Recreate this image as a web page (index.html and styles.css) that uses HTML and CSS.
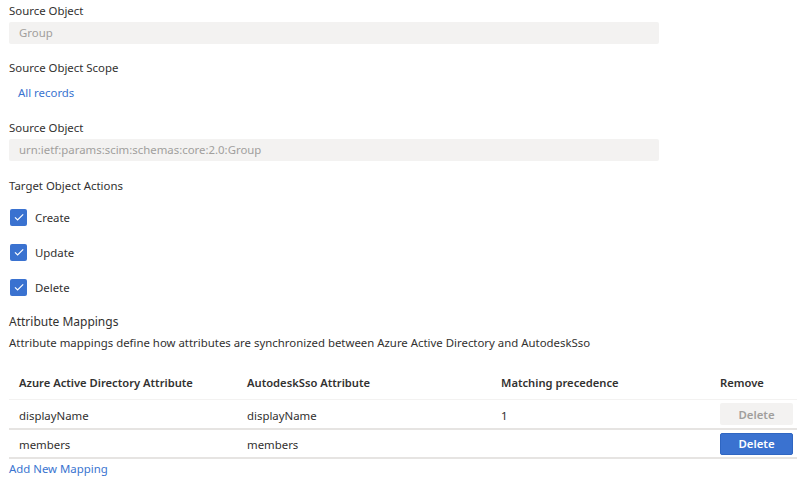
FILE: index.html
```html
<!DOCTYPE html>
<html>
<head>
<meta charset="utf-8">
<link rel="stylesheet" href="styles.css">
</head>
<body>
<div class="page">
  <div class="label first">Source Object</div>
  <div class="input">Group</div>

  <div class="label gap16">Source Object Scope</div>
  <a class="link scope">All records</a>

  <div class="label gap19">Source Object</div>
  <div class="input">urn:ietf:params:scim:schemas:core:2.0:Group</div>

  <div class="label gap17">Target Object Actions</div>
  <div class="checks">
    <label class="check"><span class="box"><svg viewBox="0 0 16 16" width="16" height="16"><path d="M4 8.3l2.6 2.6L12.2 5.3" fill="none" stroke="#fff" stroke-width="1.2"/></svg></span>Create</label>
    <label class="check"><span class="box"><svg viewBox="0 0 16 16" width="16" height="16"><path d="M4 8.3l2.6 2.6L12.2 5.3" fill="none" stroke="#fff" stroke-width="1.2"/></svg></span>Update</label>
    <label class="check"><span class="box"><svg viewBox="0 0 16 16" width="16" height="16"><path d="M4 8.3l2.6 2.6L12.2 5.3" fill="none" stroke="#fff" stroke-width="1.2"/></svg></span>Delete</label>
  </div>

  <div class="section-title">Attribute Mappings</div>
  <div class="desc">Attribute mappings define how attributes are synchronized between Azure Active Directory and AutodeskSso</div>

  <div class="table">
    <div class="row head">
      <div class="cell">Azure Active Directory Attribute</div>
      <div class="cell">AutodeskSso Attribute</div>
      <div class="cell">Matching precedence</div>
      <div class="cell last">Remove</div>
    </div>
    <div class="row r1">
      <div class="cell txt">displayName</div>
      <div class="cell txt">displayName</div>
      <div class="cell txt">1</div>
      <div class="cell last"><button class="btn disabled">Delete</button></div>
    </div>
    <div class="row r2">
      <div class="cell txt">members</div>
      <div class="cell txt">members</div>
      <div class="cell txt"></div>
      <div class="cell last"><button class="btn primary">Delete</button></div>
    </div>
  </div>
  <a class="link add">Add New Mapping</a>
</div>
</body>
</html>
```

FILE: styles.css
```css
html, body {
  margin: 0;
  padding: 0;
  background: #ffffff;
}
body {
  font-family: "Noto Sans", "Open Sans", sans-serif;
  font-size: 11.4px;
  color: #323130;
}
.page {
  display: flex;
  flex-direction: column;
  align-items: flex-start;
  padding: 3px 0 0 9px;
}
.label {
  line-height: 16px;
  height: 16px;
}
.label + .input { margin-top: 3px; }
.gap16 { margin-top: 16px; }
.gap19 { margin-top: 19px; }
.gap17 { margin-top: 17px; }
.input {
  box-sizing: border-box;
  width: 650px;
  height: 22px;
  line-height: 22px;
  padding-left: 10px;
  background: #f3f2f1;
  border-radius: 2px;
  color: #a19f9d;
}
.link {
  color: #3a74d0;
  line-height: 16px;
  cursor: pointer;
}
.scope {
  margin-top: 9px;
  margin-left: 9px;
}
.checks {
  display: flex;
  flex-direction: column;
  gap: 17px;
  margin-top: 14px;
}
.check {
  display: flex;
  align-items: center;
  height: 18px;
  gap: 8px;
  padding-left: 1px;
}
.box {
  width: 17px;
  height: 17px;
  box-sizing: border-box;
  background: #3a72d0;
  border-radius: 2px;
  display: flex;
  align-items: center;
  justify-content: center;
}
.section-title {
  margin-top: 18px;
  line-height: 16px;
  font-size: 12px;
}
.desc {
  margin-top: 5px;
  line-height: 16px;
}
.table {
  margin-top: 16px;
  width: 788px;
  display: flex;
  flex-direction: column;
}
.row {
  display: grid;
  grid-template-columns: 228px 254px 219px 1fr;
  align-items: center;
}
.cell {
  padding-left: 10px;
  line-height: 16px;
}
.txt {
  padding-top: 3px;
}
.head {
  height: 32px;
  font-weight: 600;
  font-size: 11.2px;
  border-bottom: 1px solid #f3f2f1;
}
.r1 {
  height: 28px;
  border-bottom: 2px solid #e6e4e2;
}
.r2 {
  height: 27px;
  border-bottom: 2px solid #e6e4e2;
}
.btn {
  width: 73px;
  height: 22px;
  border-radius: 2px;
  font-family: inherit;
  font-size: 11.4px;
  font-weight: 600;
  border: 1px solid transparent;
  padding: 0;
}
.disabled {
  background: #f3f2f1;
  color: #a19f9d;
}
.primary {
  background: #3a72d0;
  color: #ffffff;
  border-color: #2f66c2;
}
.add {
  margin-top: 2px;
}
```
